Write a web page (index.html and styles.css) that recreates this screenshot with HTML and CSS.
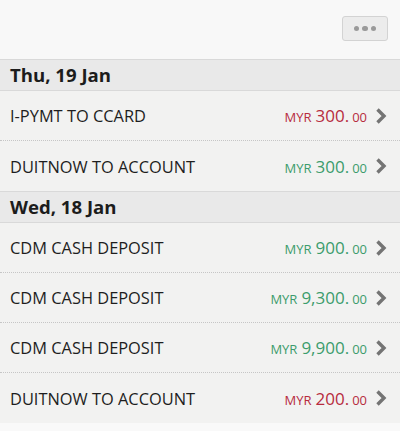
FILE: index.html
```html
<!DOCTYPE html>
<html>
<head>
<meta charset="utf-8">
<link rel="stylesheet" href="styles.css">
</head>
<body>
<div class="page">
  <div class="topbar">
    <button class="more"><span class="dot"></span><span class="dot"></span><span class="dot"></span></button>
  </div>
  <div class="group">
    <div class="day">Thu, 19 Jan</div>
    <div class="row">
      <span class="desc">I-PYMT TO CCARD</span>
      <span class="amt debit"><span class="cur">MYR</span><span class="big">300.</span><span class="cents">00</span></span>
      <svg class="chev" width="12" height="18" viewBox="0 0 12 18"><polyline points="2.5,2.5 9,9 2.5,15.5" fill="none" stroke="#747474" stroke-width="3.4"/></svg>
    </div>
    <div class="row">
      <span class="desc">DUITNOW TO ACCOUNT</span>
      <span class="amt credit"><span class="cur">MYR</span><span class="big">300.</span><span class="cents">00</span></span>
      <svg class="chev" width="12" height="18" viewBox="0 0 12 18"><polyline points="2.5,2.5 9,9 2.5,15.5" fill="none" stroke="#747474" stroke-width="3.4"/></svg>
    </div>
  </div>
  <div class="group">
    <div class="day">Wed, 18 Jan</div>
    <div class="row">
      <span class="desc">CDM CASH DEPOSIT</span>
      <span class="amt credit"><span class="cur">MYR</span><span class="big">900.</span><span class="cents">00</span></span>
      <svg class="chev" width="12" height="18" viewBox="0 0 12 18"><polyline points="2.5,2.5 9,9 2.5,15.5" fill="none" stroke="#747474" stroke-width="3.4"/></svg>
    </div>
    <div class="row">
      <span class="desc">CDM CASH DEPOSIT</span>
      <span class="amt credit"><span class="cur">MYR</span><span class="big">9,300.</span><span class="cents">00</span></span>
      <svg class="chev" width="12" height="18" viewBox="0 0 12 18"><polyline points="2.5,2.5 9,9 2.5,15.5" fill="none" stroke="#747474" stroke-width="3.4"/></svg>
    </div>
    <div class="row">
      <span class="desc">CDM CASH DEPOSIT</span>
      <span class="amt credit"><span class="cur">MYR</span><span class="big">9,900.</span><span class="cents">00</span></span>
      <svg class="chev" width="12" height="18" viewBox="0 0 12 18"><polyline points="2.5,2.5 9,9 2.5,15.5" fill="none" stroke="#747474" stroke-width="3.4"/></svg>
    </div>
    <div class="row last">
      <span class="desc">DUITNOW TO ACCOUNT</span>
      <span class="amt debit"><span class="cur">MYR</span><span class="big">200.</span><span class="cents">00</span></span>
      <svg class="chev" width="12" height="18" viewBox="0 0 12 18"><polyline points="2.5,2.5 9,9 2.5,15.5" fill="none" stroke="#747474" stroke-width="3.4"/></svg>
    </div>
  </div>
</div>
</body>
</html>
```
FILE: styles.css
```css
html, body {
  margin: 0;
  padding: 0;
}
body {
  background: #f9f9f9;
  font-family: "Open Sans", "Noto Sans", sans-serif;
  color: #1e1e1e;
}
.page {
  width: 400px;
}
.topbar {
  height: 59px;
  background: #f8f8f8;
  display: flex;
  justify-content: flex-end;
  align-items: flex-start;
  padding: 0 12px 0 0;
  box-sizing: border-box;
}
.more {
  margin-top: 16px;
  width: 46px;
  height: 25px;
  border: 1px solid #d3d3d3;
  border-radius: 3px;
  background: #ececec;
  display: flex;
  align-items: center;
  justify-content: center;
  gap: 3px;
  padding: 0;
}
.dot {
  width: 5.5px;
  height: 5.5px;
  border-radius: 50%;
  background: #9a9a9a;
}
.day {
  height: 32px;
  box-sizing: border-box;
  border-top: 1px solid #d9d9d9;
  border-bottom: 1px solid #d9d9d9;
  background: #e9e9e9;
  font-weight: 700;
  font-size: 18.6px;
  line-height: 30px;
  padding-left: 10px;
  color: #1c1c1c;
}
.row {
  height: 50px;
  box-sizing: border-box;
  background: #f2f2f1;
  display: flex;
  align-items: center;
  padding: 0 13px 0 10px;
  border-bottom: 1px dotted #c6c6c6;
}
.group .row:last-child {
  border-bottom: none;
}
.row.last {
  border-bottom: 1px solid #dddddd;
}
.desc {
  flex: 1;
  font-size: 16.4px;
  color: #1e1e1e;
}
.amt {
  display: flex;
  align-items: baseline;
  margin-right: 8px;
}
.cur {
  font-size: 13px;
  margin-right: 4px;
}
.big {
  font-size: 17px;
}
.cents {
  font-size: 13px;
  margin-left: 3px;
}
.debit {
  color: #b72c3e;
}
.credit {
  color: #3c9c6c;
}
.chev {
  display: block;
}
```
